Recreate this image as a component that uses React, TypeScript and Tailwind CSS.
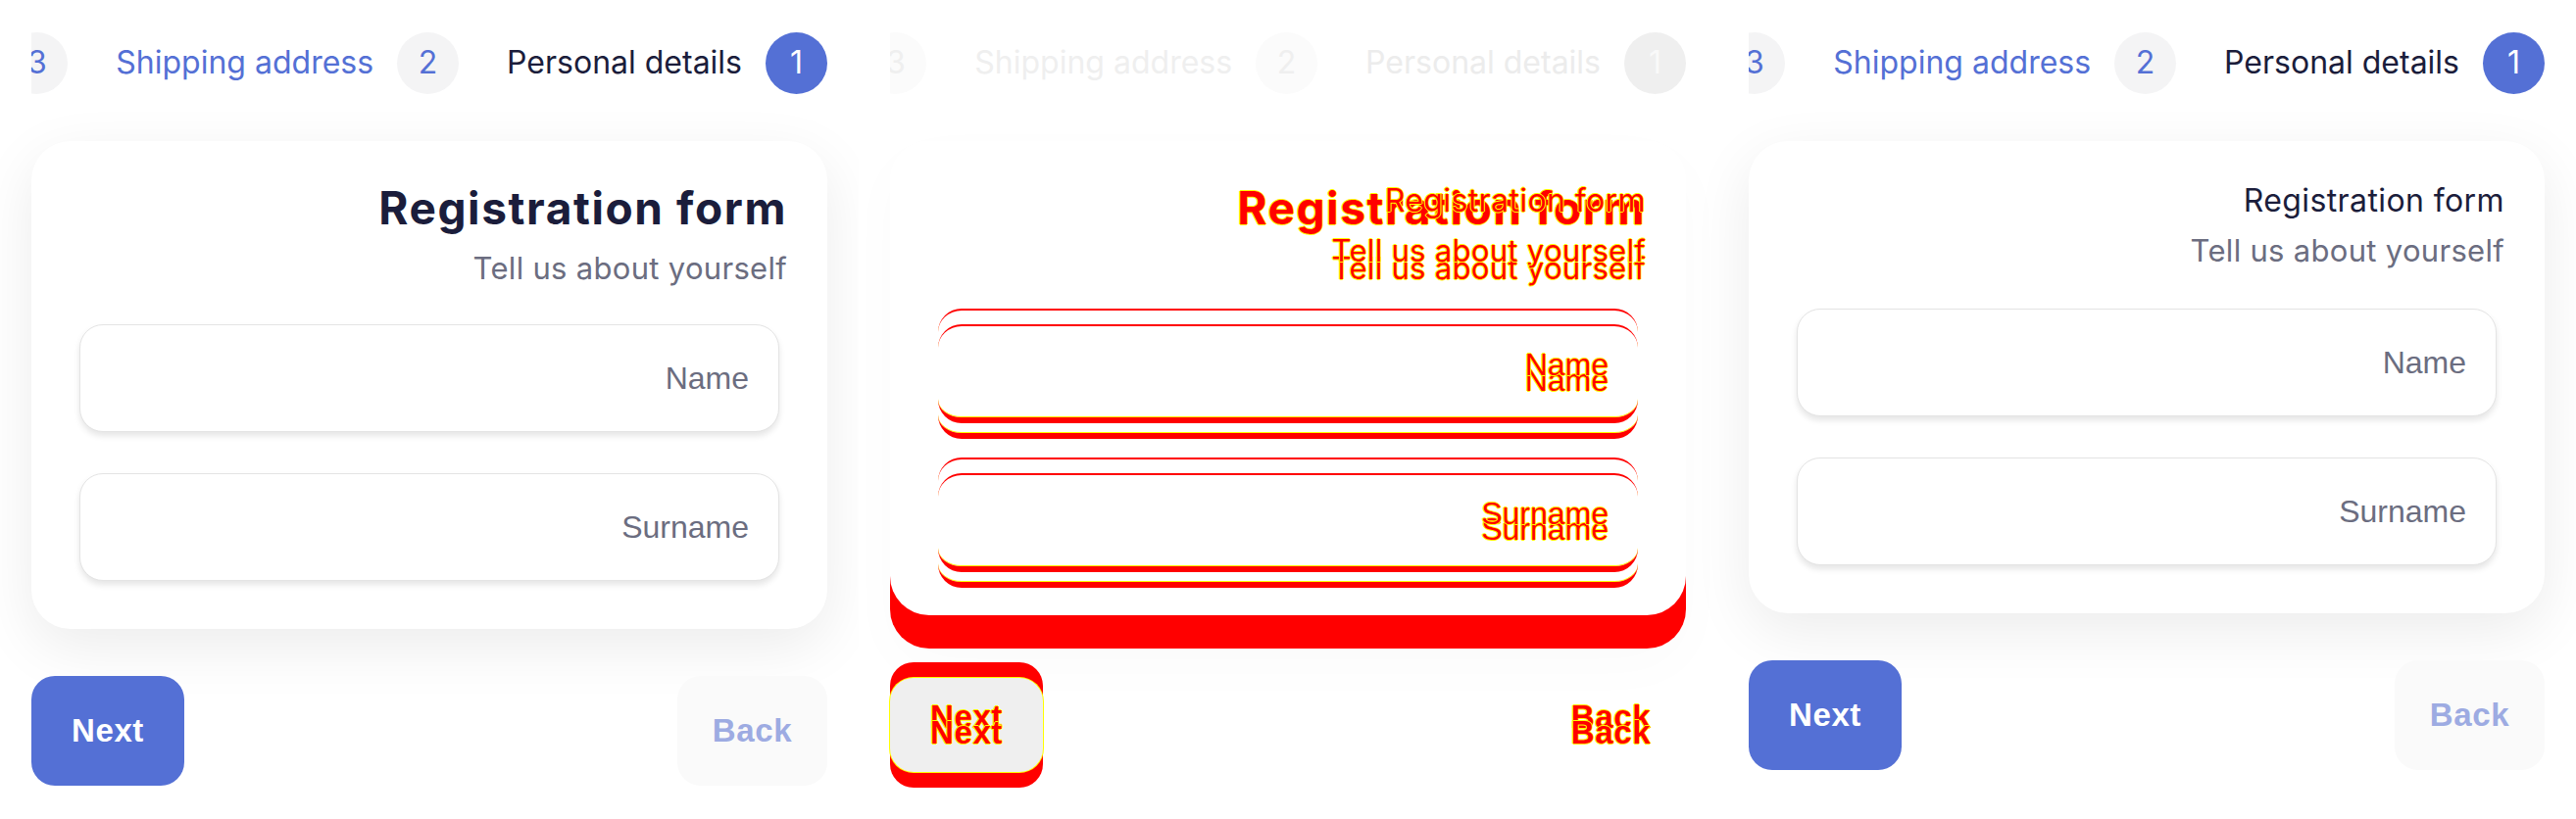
import React from 'react'

const diffText =
  "text-[#ff0000] [text-shadow:1px_0_#ffff00,-1px_0_#ffff00,0_1px_#ffff00,0_-1px_#ffff00]"

function Circle({ n, tone, className = '' }: { n: string; tone: 'muted' | 'active' | 'faint' | 'faintActive'; className?: string }) {
  const tones = {
    muted: 'bg-[#f4f4f5] text-[#5470d5]',
    active: 'bg-[#5470d5] text-white',
    faint: 'bg-[#fbfbfb] text-[#efefef]',
    faintActive: 'bg-[#efefef] text-[#f9f9f9]',
  }
  return (
    <div className={`flex h-[63px] w-[63px] shrink-0 items-center justify-center rounded-full ${tones[tone]} ${className}`}>
      {n}
    </div>
  )
}

function StepBar({ faint = false }: { faint?: boolean }) {
  return (
    <div className="flex h-16 items-center justify-end overflow-hidden font-['Inter',sans-serif] text-[32px] leading-none">
      <Circle n="3" tone={faint ? 'faint' : 'muted'} />
      <span className={`ml-[49px] shrink-0 whitespace-nowrap ${faint ? 'text-[#efefef]' : 'text-[#5470d5]'}`}>
        Shipping address
      </span>
      <Circle n="2" tone={faint ? 'faint' : 'muted'} className="ml-6" />
      <span className={`ml-[49px] shrink-0 whitespace-nowrap ${faint ? 'text-[#ececec]' : 'text-[#1b1d3b]'}`}>
        Personal details
      </span>
      <Circle n="1" tone={faint ? 'faintActive' : 'active'} className="ml-6" />
    </div>
  )
}

function Field({ label }: { label: string }) {
  return (
    <input
      dir="rtl"
      placeholder={label}
      className="h-[110px] w-full rounded-[24px] border-[1.5px] border-[#e4e4e4] bg-white pr-[30px] font-['Liberation_Sans',Arial,sans-serif] text-[32px] text-[#1b1d3b] shadow-[0_4px_6px_rgba(0,0,0,0.1)] outline-none placeholder:text-[#6b6d80]"
    />
  )
}

function Heading({ bold, diff = false }: { bold: boolean; diff?: boolean }) {
  const tone = diff ? diffText : 'text-[#1b1d3b]'
  const sub = diff ? diffText : 'text-[#6b6d80]'
  return (
    <div className={`pr-[41px] text-right font-['Inter',sans-serif] leading-none ${bold ? 'pt-[45px]' : 'pt-[45px]'}`}>
      {bold ? (
        <h1 className={`text-[46px] font-bold tracking-[1.6px] ${tone}`}>Registration form</h1>
      ) : (
        <h1 className={`text-[32px] tracking-[0.4px] ${tone}`}>Registration form</h1>
      )}
      <p className={`text-[31px] tracking-[0.3px] ${sub} ${bold ? 'mt-[23px]' : 'mt-[19px]'}`}>Tell us about yourself</p>
    </div>
  )
}

function FormPanel({ bold }: { bold: boolean }) {
  return (
    <section className="flex h-[836px] w-[876px] shrink-0 flex-col bg-white px-8 pt-8">
      <StepBar />
      <div className="mt-12 rounded-[40px] bg-white pb-[49px] shadow-[0_18px_60px_rgba(0,0,0,0.08)]">
        <Heading bold={bold} />
        <div className={`flex flex-col gap-[42px] px-[49px] ${bold ? 'mt-[42px]' : 'mt-[44px]'}`}>
          <Field label="Name" />
          <Field label="Surname" />
        </div>
      </div>
      <div className="mt-12 flex justify-between font-['Liberation_Sans',Arial,sans-serif] text-[33px] font-bold tracking-[0.6px]">
        <button className="h-[112px] w-[156px] rounded-[24px] bg-[#5470d5] text-white">Next</button>
        <button className="h-[112px] w-[153px] rounded-[24px] bg-[#fafafa] text-[#9dabe2]">Back</button>
      </div>
    </section>
  )
}

function DiffField({ label }: { label: string }) {
  return (
    <div className="flex h-[117px] items-center justify-end rounded-[24px] border-x-0 border-t-2 border-b-[6px] border-[#ff0000] pr-[30px] shadow-[inset_0_-1px_0_#ffff00]">
      <span className={`font-['Liberation_Sans',Arial,sans-serif] text-[32px] ${diffText}`}>{label}</span>
    </div>
  )
}

function DiffLayer({ bold }: { bold: boolean }) {
  return (
    <div className="col-start-1 row-start-1">
      <Heading bold={bold} diff />
      <div className={`flex flex-col gap-[35px] px-[49px] ${bold ? 'mt-[42px]' : 'mt-[44px]'}`}>
        <DiffField label="Name" />
        <DiffField label="Surname" />
      </div>
    </div>
  )
}

function DiffButton({ label, filled }: { label: string; filled: boolean }) {
  return (
    <div className={`grid h-[128px] rounded-[24px] ${filled ? 'w-[156px] bg-[#ff0000]' : 'w-[153px]'}`}>
      {filled && <div className="col-start-1 row-start-1 my-4 rounded-[24px] bg-[#efefef] shadow-[0_0_0_1px_#ffff00]" />}
      <div className={`col-start-1 row-start-1 flex h-[112px] items-center justify-center self-start ${diffText}`}>
        {label}
      </div>
      <div className={`col-start-1 row-start-1 flex h-[112px] items-center justify-center self-end ${diffText}`}>
        {label}
      </div>
    </div>
  )
}

function DiffPanel() {
  return (
    <section className="flex h-[836px] w-[876px] shrink-0 flex-col bg-white px-8 pt-8">
      <StepBar faint />
      <div className="mt-12 grid h-[518px] rounded-[40px] shadow-[0_18px_60px_rgba(0,0,0,0.02)]">
        <div className="col-start-1 row-start-1 mt-[100px] h-[418px] rounded-[40px] bg-[#ff0000]" />
        <div className="col-start-1 row-start-1 grid h-[484px] self-start rounded-[40px] bg-white">
          <DiffLayer bold />
          <DiffLayer bold={false} />
        </div>
      </div>
      <div className="mt-[14px] flex justify-between font-['Liberation_Sans',Arial,sans-serif] text-[33px] font-bold tracking-[0.6px]">
        <DiffButton label="Next" filled />
        <DiffButton label="Back" filled={false} />
      </div>
    </section>
  )
}

export default function App() {
  return (
    <div className="flex h-[836px] w-[2628px] overflow-hidden bg-white">
      <FormPanel bold />
      <DiffPanel />
      <FormPanel bold={false} />
    </div>
  )
}
